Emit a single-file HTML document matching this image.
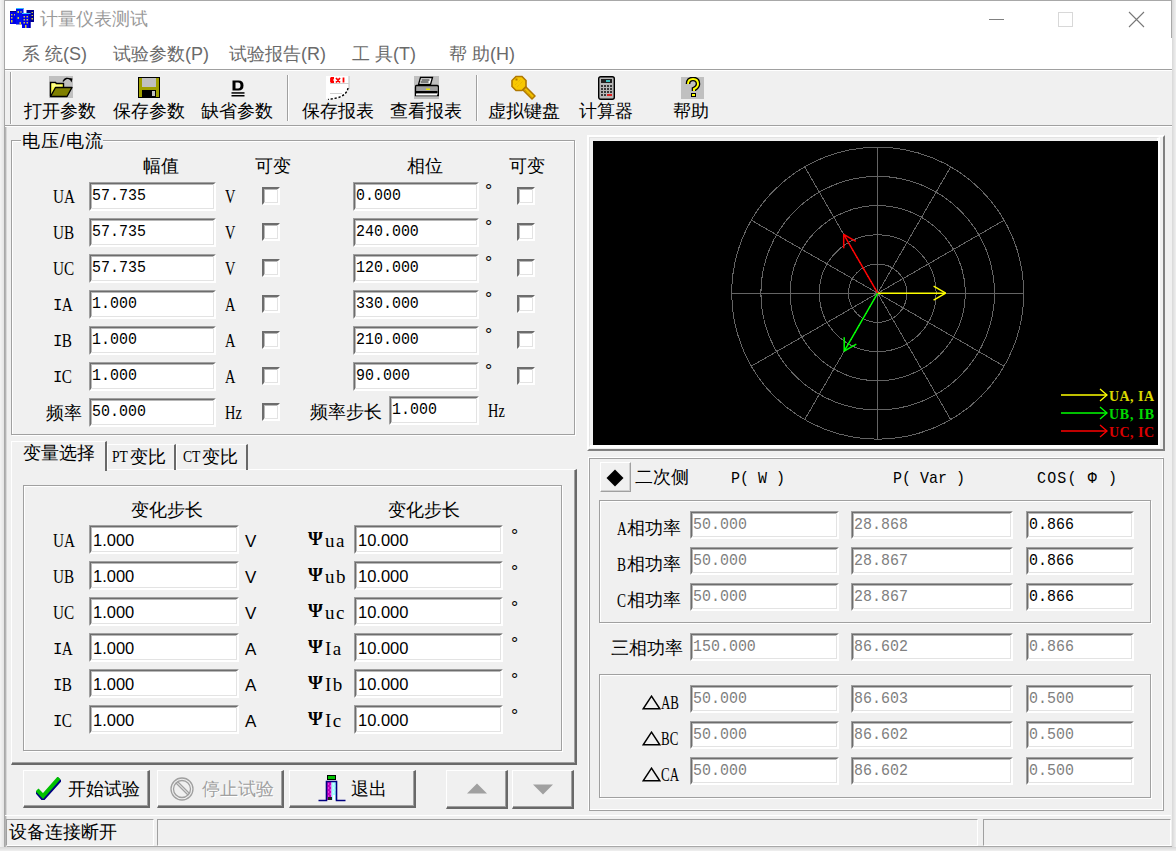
<!DOCTYPE html><html><head><meta charset="utf-8"><style>
*{margin:0;padding:0;box-sizing:content-box}
html,body{width:1176px;height:851px;overflow:hidden;background:#f0f0f0}
body{position:relative;font-family:"Liberation Sans",sans-serif}
div{position:absolute}
.cj{font-size:18px;line-height:18px;white-space:nowrap;color:#000}
.sf{font-family:"Liberation Serif",serif;font-size:19px;line-height:18px;white-space:nowrap;color:#000;transform:scaleX(0.8);transform-origin:0 0}
.ss{font-size:17px;line-height:18px;white-space:nowrap;color:#000}
.mn{font-family:"Liberation Mono",monospace;font-size:17px;line-height:18px;white-space:nowrap}
.edit{background:#fff;border-style:solid;border-width:2px;border-color:#6d6d6d #fff #fff #6d6d6d;box-shadow:inset -1px -1px 0 #e3e3e3, inset 1px 1px 0 #b8b8b8;}
.edit::before{content:"";position:absolute;left:-2px;top:-2px;right:-2px;bottom:-2px;border-style:solid;border-width:1px;border-color:#a0a0a0 #fff #fff #a0a0a0}
.ed{position:absolute;left:1px;top:3px;font-family:"Liberation Mono",monospace;font-size:17px;line-height:18px;white-space:nowrap;display:inline-block;transform:scaleX(0.88);transform-origin:0 0}
.eds{position:absolute;left:2px;top:4px;font-family:"Liberation Sans",sans-serif;font-size:16.5px;line-height:18px;white-space:nowrap}
.grp{border:1px solid #a0a0a0;box-shadow:1px 1px 0 #fff, inset 1px 1px 0 #fff}
.grp2{border:1px solid #a0a0a0;box-shadow:-1px -1px 0 #fff, inset -1px -1px 0 #fff}
.btn{background:#f0f0f0;border-style:solid;border-width:1px 2px 2px 1px;border-color:#fff #696969 #696969 #fff;box-shadow:inset -1px -1px 0 #a0a0a0}
.chk{background:#fff;border-style:solid;border-width:2px;border-color:#6d6d6d #fff #fff #6d6d6d;box-shadow:inset -1px -1px 0 #e3e3e3, inset 1px 1px 0 #b8b8b8}
</style></head><body><div style="left:0;top:0;width:4px;height:851px;background:linear-gradient(90deg,#f4f4f4,#e4e4e4)"></div><div style="left:1172px;top:0;width:4px;height:851px;background:linear-gradient(90deg,#d8d8d8,#f0f0f0)"></div><div style="left:0;top:847px;width:1176px;height:4px;background:linear-gradient(180deg,#d8d8d8,#f0f0f0)"></div><div style="position:absolute;left:4px;top:0px;width:1168px;height:847px;box-sizing:border-box;border:1px solid #a8a8a8;border-right:0;background:#f0f0f0"></div><div style="position:absolute;left:5px;top:1px;width:1167px;height:68px;background:#fff"></div><div style="position:absolute;left:1171px;top:0px;width:1px;height:38px;background:#a8a8a8"></div><div style="position:absolute;left:5px;top:69px;width:1167px;height:1px;background:#a0a0a0"></div><div style="position:absolute;left:5px;top:70px;width:1167px;height:1px;background:#fff"></div><svg style="position:absolute;left:10px;top:8px" width="25" height="21" viewBox="0 0 25 21">
<rect x="0" y="3" width="6" height="13" fill="#0000e8"/><rect x="0" y="3" width="6" height="1" fill="#000080"/>
<rect x="16.5" y="2" width="7.5" height="12" fill="#000090"/>
<rect x="6" y="0" width="7.5" height="16.5" fill="#0010f0"/><rect x="6" y="0" width="7.5" height="1" fill="#30c0ff"/>
<rect x="12" y="5" width="8.5" height="15" fill="#0000f0"/><rect x="12" y="5" width="8.5" height="1" fill="#30c0ff"/><rect x="19" y="6" width="1.5" height="14" fill="#0000a0"/>
<g fill="#d0c840"><rect x="1" y="6" width="1.5" height="1.5"/><rect x="4" y="6" width="1" height="1.5"/><rect x="1" y="9" width="1.5" height="1.5"/><rect x="1" y="12" width="1.5" height="2.5"/>
<rect x="7.5" y="3" width="1.5" height="2"/><rect x="10.5" y="3" width="1" height="2"/><rect x="7.5" y="9" width="1.5" height="2"/><rect x="9.5" y="14" width="1.5" height="3"/>
<rect x="13.5" y="8" width="1.5" height="1.5"/><rect x="16.5" y="8" width="1.5" height="1.5"/><rect x="13.5" y="11" width="1.5" height="1.5"/><rect x="16.5" y="11" width="1.5" height="1.5"/><rect x="13.5" y="14" width="1.5" height="1.5"/><rect x="16.5" y="14" width="1.5" height="1.5"/><rect x="15" y="17" width="1.5" height="3"/>
<rect x="21.5" y="4" width="1.5" height="1"/><rect x="21.5" y="7" width="1.5" height="1"/><rect x="21.5" y="10" width="1.5" height="1.5"/></g></svg><div class="cj" style="left:40px;top:10px;color:#9a9a9a">计量仪表测试</div><div style="position:absolute;left:989px;top:19px;width:15px;height:1px;background:#808080"></div><div style="position:absolute;left:1058px;top:12px;width:15px;height:15px;box-sizing:border-box;border:1px solid #d8d8d8"></div><svg style="position:absolute;left:1128px;top:11px" width="17" height="17"><path d="M1 1L16 16M16 1L1 16" stroke="#777" stroke-width="1.1"/></svg><div class="cj" style="left:22px;top:45px;font-size:18px;color:#6a6a6a">系 统(S)</div><div class="cj" style="left:113px;top:45px;font-size:18px;color:#6a6a6a">试验参数(P)</div><div class="cj" style="left:229px;top:45px;font-size:18px;color:#6a6a6a">试验报告(R)</div><div class="cj" style="left:352px;top:45px;font-size:18px;color:#6a6a6a">工 具(T)</div><div class="cj" style="left:449px;top:45px;font-size:18px;color:#6a6a6a">帮 助(H)</div><div style="position:absolute;left:10px;top:72px;width:1px;height:52px;background:#a0a0a0;box-shadow:1px 0 0 #fff"></div><div style="position:absolute;left:5px;top:125px;width:1167px;height:1px;background:#a0a0a0"></div><div style="position:absolute;left:5px;top:126px;width:1167px;height:1px;background:#fff"></div><div class="cj" style="left:24px;top:102px;">打开参数</div><div class="cj" style="left:113px;top:102px;">保存参数</div><div class="cj" style="left:201px;top:102px;">缺省参数</div><div class="cj" style="left:302px;top:102px;">保存报表</div><div class="cj" style="left:390px;top:102px;">查看报表</div><div class="cj" style="left:488px;top:102px;">虚拟键盘</div><div class="cj" style="left:579px;top:102px;">计算器</div><div class="cj" style="left:673px;top:102px;">帮助</div><div style="position:absolute;left:287px;top:75px;width:1px;height:46px;background:#a0a0a0;box-shadow:1px 0 0 #fff"></div><div style="position:absolute;left:476px;top:75px;width:1px;height:46px;background:#a0a0a0;box-shadow:1px 0 0 #fff"></div><svg style="position:absolute;left:49px;top:76px" width="24" height="22" viewBox="0 0 24 22">
<rect width="24" height="22" fill="#c0c0c0"/>
<path d="M1.5 20V6.5h5l1 1h7v4" fill="#ffff50" stroke="#000" stroke-width="1.4"/>
<path d="M3 8h3M3 10h9" stroke="#ffffc0" stroke-width="1"/>
<path d="M1.5 20.5l5-9h16.5l-5 9z" fill="#808000" stroke="#000" stroke-width="1.4" stroke-linejoin="round"/>
<path d="M14 5.5q3-5 7.5-2" fill="none" stroke="#000" stroke-width="1.4"/><path d="M20 2l3.5 0.5l-1 4z" fill="#000"/></svg><svg style="position:absolute;left:138px;top:77px" width="22" height="21" viewBox="0 0 22 21">
<rect x="0.5" y="0.5" width="21" height="20" fill="#a0a000" stroke="#000"/>
<rect x="4" y="1" width="14" height="9" fill="#c0c0c0"/><rect x="4" y="13" width="14" height="7" fill="#000"/><rect x="14" y="14" width="3" height="5" fill="#c0c0c0"/></svg><svg style="position:absolute;left:230px;top:79px" width="17" height="19" viewBox="0 0 17 19">
<path d="M2.5 1.5h6q5 0 5 5q0 5-5 5h-6z M5.5 3.5v6h2.5q2.5 0 2.5-3q0-3-2.5-3z" fill="#000" fill-rule="evenodd"/><rect x="1.5" y="13.2" width="13" height="1.5" fill="#000"/><rect x="1.5" y="16" width="13" height="1.5" fill="#000"/></svg><svg style="position:absolute;left:326px;top:76px" width="25" height="24" viewBox="0 0 25 24">
<path d="M0 0h23v13q-4 8-13 10H0z" fill="#fff"/>
<path d="M23 0v13" stroke="#c0c0c0" stroke-width="1"/><path d="M4 7.5h19M4 17.5h12" stroke="#d0d0d0" stroke-width="1"/>
<path d="M5 1.5v5M5 2h3M5 4h2.5M5 6h3M10 2l4 4.5M14 2l-4 4.5M17.5 1.5v5" fill="none" stroke="#ff0000" stroke-width="1.8"/>
<path d="M22 12q-1 7-11 10L2 23.5" fill="none" stroke="#000" stroke-width="1.4" stroke-dasharray="2.2 1.8"/></svg><svg style="position:absolute;left:414px;top:76px" width="25" height="23" viewBox="0 0 25 23">
<rect width="25" height="23" fill="#c0c0c0"/>
<path d="M6.5 1.5h12l-2 7h-12z" fill="#fff" stroke="#000" stroke-width="1.3"/><path d="M7.5 4h8M6.5 6h8" stroke="#000"/>
<path d="M2 9.5h21q1.5 0 1.5 2v8h-23v-8q0-2 0.5-2z" fill="#a0a0a0" stroke="#000" stroke-width="1.3"/><rect x="1.5" y="15" width="22" height="2" fill="#000"/><rect x="2" y="18" width="21" height="1.5" fill="#fff"/><rect x="12" y="12.5" width="4" height="1.5" fill="#e8e000"/></svg><svg style="position:absolute;left:511px;top:75px" width="25" height="25" viewBox="0 0 25 25">
<path d="M5 1.5h6l4 4v6l-4 4h-6l-4-4v-6z" fill="#f8c800" stroke="#b07800" stroke-width="1.6"/>
<path d="M4.5 3.5h2v2h-2z" fill="#b07800"/><path d="M4 10l6-6M6 12l6-6" stroke="#e0a800" stroke-width="0.8" stroke-dasharray="1 1"/>
<path d="M12 15l3-3l9 9l-3 3z" fill="#f0c000" stroke="#b07800" stroke-width="1.5" stroke-linejoin="round"/>
<path d="M14 15l7 7" stroke="#c89000" stroke-width="1" stroke-dasharray="1 1"/></svg><svg style="position:absolute;left:598px;top:76px" width="17" height="24" viewBox="0 0 17 24">
<rect x="0.7" y="0.7" width="15.6" height="22.6" rx="2" fill="#b8b8b8" stroke="#000" stroke-width="1.4"/><rect x="3" y="3" width="11" height="4" fill="#202020"/><rect x="8" y="4" width="4" height="2" fill="#40c0c0"/>
<g fill="#383838"><rect x="3" y="9" width="2" height="2"/><rect x="6" y="9" width="2" height="2"/><rect x="9" y="9" width="2" height="2"/><rect x="12" y="9" width="2" height="2"/>
<rect x="3" y="12" width="2" height="2"/><rect x="6" y="12" width="2" height="2"/><rect x="9" y="12" width="2" height="2"/><rect x="12" y="12" width="2" height="2"/>
<rect x="3" y="15" width="2" height="2"/><rect x="6" y="15" width="2" height="2"/><rect x="9" y="15" width="2" height="2"/><rect x="12" y="15" width="2" height="2"/>
<rect x="3" y="18" width="2" height="2"/><rect x="6" y="18" width="2" height="2"/></g><rect x="9" y="18" width="5" height="2" fill="#e02020"/></svg><svg style="position:absolute;left:681px;top:77px" width="23" height="22" viewBox="0 0 23 22">
<rect width="23" height="22" fill="#c0c0c0"/>
<path d="M7 7q0-5 5-5t5 5q0 3-4 5v2" fill="none" stroke="#000" stroke-width="4.6"/><path d="M7 7q0-5 5-5t5 5q0 3-4 5v2" fill="none" stroke="#ffff00" stroke-width="2"/>
<rect x="10" y="16" width="5" height="4" fill="#000"/><rect x="11" y="17" width="3" height="2" fill="#ffff00"/></svg><div style="position:absolute;left:5px;top:127px;width:1px;height:720px;background:#b4b4b4"></div><div style="position:absolute;left:6px;top:127px;width:1px;height:720px;background:#d8d8d8"></div><div class="grp" style="left:11px;top:140px;width:562px;height:293px;"></div><div style="position:absolute;left:21px;top:130px;width:82px;height:20px;background:#f0f0f0"></div><div class="cj" style="left:22px;top:132px;letter-spacing:1px">电压/电流</div><div class="cj" style="left:143px;top:157px;">幅值</div><div class="cj" style="left:255px;top:157px;">可变</div><div class="cj" style="left:407px;top:157px;">相位</div><div class="cj" style="left:509px;top:157px;">可变</div><div class="sf" style="left:53px;top:188px;">UA</div><div class="edit" style="left:89px;top:182px;width:123px;height:25px"><span class="ed" style="color:#000">57.735</span></div><div class="sf" style="left:225px;top:188px;font-size:18px">V</div><div class="chk" style="left:262px;top:187px;width:14px;height:14px"></div><div class="edit" style="left:353px;top:182px;width:122px;height:25px"><span class="ed" style="color:#000">0.000</span></div><div class="cj" style="left:485px;top:182px;">°</div><div class="chk" style="left:517px;top:187px;width:14px;height:14px"></div><div class="sf" style="left:53px;top:224px;">UB</div><div class="edit" style="left:89px;top:218px;width:123px;height:25px"><span class="ed" style="color:#000">57.735</span></div><div class="sf" style="left:225px;top:224px;font-size:18px">V</div><div class="chk" style="left:262px;top:223px;width:14px;height:14px"></div><div class="edit" style="left:353px;top:218px;width:122px;height:25px"><span class="ed" style="color:#000">240.000</span></div><div class="cj" style="left:485px;top:218px;">°</div><div class="chk" style="left:517px;top:223px;width:14px;height:14px"></div><div class="sf" style="left:53px;top:260px;">UC</div><div class="edit" style="left:89px;top:254px;width:123px;height:25px"><span class="ed" style="color:#000">57.735</span></div><div class="sf" style="left:225px;top:260px;font-size:18px">V</div><div class="chk" style="left:262px;top:259px;width:14px;height:14px"></div><div class="edit" style="left:353px;top:254px;width:122px;height:25px"><span class="ed" style="color:#000">120.000</span></div><div class="cj" style="left:485px;top:254px;">°</div><div class="chk" style="left:517px;top:259px;width:14px;height:14px"></div><div class="sf" style="left:53px;top:296px;"><span style="font-family:Liberation Mono;font-size:17px;display:inline-block;transform:scaleX(1.15) translateY(-1px);transform-origin:0 0;width:11px">I</span>A</div><div class="edit" style="left:89px;top:290px;width:123px;height:25px"><span class="ed" style="color:#000">1.000</span></div><div class="sf" style="left:225px;top:296px;font-size:18px">A</div><div class="chk" style="left:262px;top:295px;width:14px;height:14px"></div><div class="edit" style="left:353px;top:290px;width:122px;height:25px"><span class="ed" style="color:#000">330.000</span></div><div class="cj" style="left:485px;top:290px;">°</div><div class="chk" style="left:517px;top:295px;width:14px;height:14px"></div><div class="sf" style="left:53px;top:332px;"><span style="font-family:Liberation Mono;font-size:17px;display:inline-block;transform:scaleX(1.15) translateY(-1px);transform-origin:0 0;width:11px">I</span>B</div><div class="edit" style="left:89px;top:326px;width:123px;height:25px"><span class="ed" style="color:#000">1.000</span></div><div class="sf" style="left:225px;top:332px;font-size:18px">A</div><div class="chk" style="left:262px;top:331px;width:14px;height:14px"></div><div class="edit" style="left:353px;top:326px;width:122px;height:25px"><span class="ed" style="color:#000">210.000</span></div><div class="cj" style="left:485px;top:326px;">°</div><div class="chk" style="left:517px;top:331px;width:14px;height:14px"></div><div class="sf" style="left:53px;top:368px;"><span style="font-family:Liberation Mono;font-size:17px;display:inline-block;transform:scaleX(1.15) translateY(-1px);transform-origin:0 0;width:11px">I</span>C</div><div class="edit" style="left:89px;top:362px;width:123px;height:25px"><span class="ed" style="color:#000">1.000</span></div><div class="sf" style="left:225px;top:368px;font-size:18px">A</div><div class="chk" style="left:262px;top:367px;width:14px;height:14px"></div><div class="edit" style="left:353px;top:362px;width:122px;height:25px"><span class="ed" style="color:#000">90.000</span></div><div class="cj" style="left:485px;top:362px;">°</div><div class="chk" style="left:517px;top:367px;width:14px;height:14px"></div><div class="cj" style="left:46px;top:404px;">频率</div><div class="edit" style="left:89px;top:398px;width:123px;height:25px"><span class="ed" style="color:#000">50.000</span></div><div class="sf" style="left:225px;top:404px;font-size:18px">Hz</div><div class="chk" style="left:262px;top:403px;width:14px;height:14px"></div><div class="cj" style="left:310px;top:403px;">频率步长</div><div class="edit" style="left:389px;top:396px;width:86px;height:25px"><span class="ed" style="color:#000">1.000</span></div><div class="sf" style="left:488px;top:402px;font-size:18px">Hz</div><div style="left:11px;top:469px;width:563px;height:293px;border-style:solid;border-width:1px 2px 2px 1px;border-color:#fff #696969 #696969 #fff;box-shadow:inset -1px -1px 0 #a0a0a0"></div><div style="left:11px;top:441px;width:93px;height:29px;background:#f0f0f0;border-style:solid;border-width:1px 2px 0 1px;border-color:#fff #696969 #fff #fff"></div><div style="left:107px;top:444px;width:66px;height:25px;border-style:solid;border-width:1px 2px 0 1px;border-color:#fff #696969 #fff #fff"></div><div style="left:176px;top:444px;width:69px;height:25px;border-style:solid;border-width:1px 2px 0 1px;border-color:#fff #696969 #fff #fff"></div><div class="cj" style="left:23px;top:444px;">变量选择</div><div class="sf" style="left:112px;top:448px;font-size:17px">PT</div><div class="cj" style="left:130px;top:448px;">变比</div><div class="sf" style="left:183px;top:448px;font-size:17px">CT</div><div class="cj" style="left:202px;top:448px;">变比</div><div class="grp" style="left:23px;top:485px;width:537px;height:264px;"></div><div class="cj" style="left:131px;top:501px;">变化步长</div><div class="cj" style="left:388px;top:501px;">变化步长</div><div class="sf" style="left:53px;top:532px;">UA</div><div class="edit" style="left:89px;top:525px;width:146px;height:25px"><span class="eds">1.000</span></div><div class="ss" style="left:245px;top:533px;">V</div><div class="sf" style="left:308px;top:530px;font-size:19px;font-weight:bold;transform:none">Ψ</div><div class="sf" style="left:325px;top:532px;font-size:19px;letter-spacing:1.5px;transform:none">ua</div><div class="edit" style="left:354px;top:525px;width:145px;height:25px"><span class="eds">10.000</span></div><div class="cj" style="left:511px;top:527px;">°</div><div class="sf" style="left:53px;top:568px;">UB</div><div class="edit" style="left:89px;top:561px;width:146px;height:25px"><span class="eds">1.000</span></div><div class="ss" style="left:245px;top:569px;">V</div><div class="sf" style="left:308px;top:566px;font-size:19px;font-weight:bold;transform:none">Ψ</div><div class="sf" style="left:325px;top:568px;font-size:19px;letter-spacing:1.5px;transform:none">ub</div><div class="edit" style="left:354px;top:561px;width:145px;height:25px"><span class="eds">10.000</span></div><div class="cj" style="left:511px;top:563px;">°</div><div class="sf" style="left:53px;top:604px;">UC</div><div class="edit" style="left:89px;top:597px;width:146px;height:25px"><span class="eds">1.000</span></div><div class="ss" style="left:245px;top:605px;">V</div><div class="sf" style="left:308px;top:602px;font-size:19px;font-weight:bold;transform:none">Ψ</div><div class="sf" style="left:325px;top:604px;font-size:19px;letter-spacing:1.5px;transform:none">uc</div><div class="edit" style="left:354px;top:597px;width:145px;height:25px"><span class="eds">10.000</span></div><div class="cj" style="left:511px;top:599px;">°</div><div class="sf" style="left:53px;top:640px;"><span style="font-family:Liberation Mono;font-size:17px;display:inline-block;transform:scaleX(1.15) translateY(-1px);transform-origin:0 0;width:11px">I</span>A</div><div class="edit" style="left:89px;top:633px;width:146px;height:25px"><span class="eds">1.000</span></div><div class="ss" style="left:245px;top:641px;">A</div><div class="sf" style="left:308px;top:638px;font-size:19px;font-weight:bold;transform:none">Ψ</div><div class="sf" style="left:325px;top:640px;font-size:19px;letter-spacing:1.5px;transform:none">Ia</div><div class="edit" style="left:354px;top:633px;width:145px;height:25px"><span class="eds">10.000</span></div><div class="cj" style="left:511px;top:635px;">°</div><div class="sf" style="left:53px;top:676px;"><span style="font-family:Liberation Mono;font-size:17px;display:inline-block;transform:scaleX(1.15) translateY(-1px);transform-origin:0 0;width:11px">I</span>B</div><div class="edit" style="left:89px;top:669px;width:146px;height:25px"><span class="eds">1.000</span></div><div class="ss" style="left:245px;top:677px;">A</div><div class="sf" style="left:308px;top:674px;font-size:19px;font-weight:bold;transform:none">Ψ</div><div class="sf" style="left:325px;top:676px;font-size:19px;letter-spacing:1.5px;transform:none">Ib</div><div class="edit" style="left:354px;top:669px;width:145px;height:25px"><span class="eds">10.000</span></div><div class="cj" style="left:511px;top:671px;">°</div><div class="sf" style="left:53px;top:712px;"><span style="font-family:Liberation Mono;font-size:17px;display:inline-block;transform:scaleX(1.15) translateY(-1px);transform-origin:0 0;width:11px">I</span>C</div><div class="edit" style="left:89px;top:705px;width:146px;height:25px"><span class="eds">1.000</span></div><div class="ss" style="left:245px;top:713px;">A</div><div class="sf" style="left:308px;top:710px;font-size:19px;font-weight:bold;transform:none">Ψ</div><div class="sf" style="left:325px;top:712px;font-size:19px;letter-spacing:1.5px;transform:none">Ic</div><div class="edit" style="left:354px;top:705px;width:145px;height:25px"><span class="eds">10.000</span></div><div class="cj" style="left:511px;top:707px;">°</div><div class="btn" style="left:23px;top:770px;width:124px;height:35px"></div><svg style="position:absolute;left:36px;top:777px" width="25" height="23" viewBox="0 0 25 23"><path d="M1 14l6 7L24 2" fill="none" stroke="#000080" stroke-width="5"/><path d="M1 13l6 6L23 1" fill="none" stroke="#00c000" stroke-width="4"/></svg><div class="cj" style="left:68px;top:780px;">开始试验</div><div class="btn" style="left:157px;top:770px;width:124px;height:35px"></div><svg style="position:absolute;left:169px;top:776px" width="26" height="26" viewBox="0 0 26 26"><g fill="none" stroke="#a0a0a0" stroke-width="1.3"><circle cx="13" cy="13" r="11"/><circle cx="13" cy="13" r="8.5"/><path d="M7 7l12 12M8.5 5.5l12 12"/></g></svg><div class="cj" style="left:202px;top:780px;color:#a0a0a0;text-shadow:1px 1px 0 #fff">停止试验</div><div class="btn" style="left:289px;top:770px;width:124px;height:35px"></div><svg style="position:absolute;left:318px;top:775px" width="28" height="27" viewBox="0 0 28 27">
<rect x="9.5" y="0.5" width="8" height="4" fill="#00c000" stroke="#000" stroke-width="1"/>
<rect x="8.5" y="7" width="5" height="18" fill="#c000c0"/><rect x="13.5" y="7" width="5" height="18" fill="#a0ffff"/><rect x="15" y="20" width="2" height="5" fill="#fff"/>
<path d="M10 9h1M12 11h1M10 13h1M12 15h1M10 17h1M12 19h1M10 21h1" stroke="#ff80ff"/><path d="M15 9h1M17 11h1M15 13h1M17 15h1M15 17h1" stroke="#fff"/>
<rect x="10" y="22" width="4" height="3" fill="#202020"/>
<path d="M0.5 25.5H8.5V6.5H18.5V25.5H27.5" fill="none" stroke="#000080" stroke-width="1.6"/></svg><div class="cj" style="left:351px;top:780px;">退出</div><div class="btn" style="left:446px;top:770px;width:59px;height:36px"></div><svg style="position:absolute;left:467px;top:783px" width="20" height="11"><path d="M0 10.5L10 0.5L20 10.5z" fill="#a0a0a0"/></svg><div class="btn" style="left:512px;top:770px;width:59px;height:36px"></div><svg style="position:absolute;left:533px;top:784px" width="20" height="11"><path d="M0 0.5L20 0.5L10 10.5z" fill="#a0a0a0"/></svg><div style="left:587px;top:135px;width:574px;height:312px;border-style:solid;border-width:2px 2px 2px 2px;border-color:#fff #808080 #808080 #fff"></div><div style="left:589px;top:137px;width:571px;height:311px;border-style:solid;border-width:1px 3px 3px 1px;border-color:#e3e3e3 #fff #fff #e3e3e3;box-sizing:border-box"></div><div style="position:absolute;left:593px;top:141px;width:565px;height:304px;background:#000"></div><svg style="position:absolute;left:593px;top:141px" width="565" height="304"><circle cx="284.70000000000005" cy="152.2" r="29.2" fill="none" stroke="#646464" stroke-width="1" shape-rendering="crispEdges"/><circle cx="284.70000000000005" cy="152.2" r="58.4" fill="none" stroke="#646464" stroke-width="1" shape-rendering="crispEdges"/><circle cx="284.70000000000005" cy="152.2" r="87.6" fill="none" stroke="#646464" stroke-width="1" shape-rendering="crispEdges"/><circle cx="284.70000000000005" cy="152.2" r="116.8" fill="none" stroke="#646464" stroke-width="1" shape-rendering="crispEdges"/><circle cx="284.70000000000005" cy="152.2" r="146.0" fill="none" stroke="#646464" stroke-width="1" shape-rendering="crispEdges"/><line x1="284.70000000000005" y1="152.2" x2="430.7" y2="152.2" stroke="#646464" stroke-width="1" shape-rendering="crispEdges"/><line x1="284.70000000000005" y1="152.2" x2="411.1" y2="79.2" stroke="#646464" stroke-width="1" shape-rendering="crispEdges"/><line x1="284.70000000000005" y1="152.2" x2="357.7" y2="25.8" stroke="#646464" stroke-width="1" shape-rendering="crispEdges"/><line x1="284.70000000000005" y1="152.2" x2="284.7" y2="6.2" stroke="#646464" stroke-width="1" shape-rendering="crispEdges"/><line x1="284.70000000000005" y1="152.2" x2="211.7" y2="25.8" stroke="#646464" stroke-width="1" shape-rendering="crispEdges"/><line x1="284.70000000000005" y1="152.2" x2="158.3" y2="79.2" stroke="#646464" stroke-width="1" shape-rendering="crispEdges"/><line x1="284.70000000000005" y1="152.2" x2="138.7" y2="152.2" stroke="#646464" stroke-width="1" shape-rendering="crispEdges"/><line x1="284.70000000000005" y1="152.2" x2="158.3" y2="225.2" stroke="#646464" stroke-width="1" shape-rendering="crispEdges"/><line x1="284.70000000000005" y1="152.2" x2="211.7" y2="278.6" stroke="#646464" stroke-width="1" shape-rendering="crispEdges"/><line x1="284.70000000000005" y1="152.2" x2="284.7" y2="298.2" stroke="#646464" stroke-width="1" shape-rendering="crispEdges"/><line x1="284.70000000000005" y1="152.2" x2="357.7" y2="278.6" stroke="#646464" stroke-width="1" shape-rendering="crispEdges"/><line x1="284.70000000000005" y1="152.2" x2="411.1" y2="225.2" stroke="#646464" stroke-width="1" shape-rendering="crispEdges"/><line x1="284.70000000000005" y1="152.2" x2="352.7" y2="152.2" stroke="#ffff00" stroke-width="1.5"/><line x1="352.7" y1="152.2" x2="340.6" y2="159.2" stroke="#ffff00" stroke-width="1.5"/><line x1="352.7" y1="152.2" x2="340.6" y2="145.2" stroke="#ffff00" stroke-width="1.5"/><line x1="284.70000000000005" y1="152.2" x2="250.7" y2="93.3" stroke="#ff0000" stroke-width="1.5"/><line x1="250.7" y1="93.3" x2="262.8" y2="100.3" stroke="#ff0000" stroke-width="1.5"/><line x1="250.7" y1="93.3" x2="250.7" y2="107.3" stroke="#ff0000" stroke-width="1.5"/><line x1="284.70000000000005" y1="152.2" x2="251.2" y2="210.2" stroke="#00ff00" stroke-width="1.5"/><line x1="251.2" y1="210.2" x2="251.2" y2="196.2" stroke="#00ff00" stroke-width="1.5"/><line x1="251.2" y1="210.2" x2="263.3" y2="203.2" stroke="#00ff00" stroke-width="1.5"/><line x1="468" y1="254" x2="514" y2="254" stroke="#ffff00" stroke-width="1.5"/><path d="M507 248L514 254L507 260" fill="none" stroke="#ffff00" stroke-width="1.3"/><text x="516" y="260" fill="#ffff00" font-family="Liberation Serif" font-weight="bold" font-size="14" textLength="45" lengthAdjust="spacing" opacity="0.85">UA, IA</text><line x1="468" y1="272" x2="514" y2="272" stroke="#00ff00" stroke-width="1.5"/><path d="M507 266L514 272L507 278" fill="none" stroke="#00ff00" stroke-width="1.3"/><text x="516" y="278" fill="#00ff00" font-family="Liberation Serif" font-weight="bold" font-size="14" textLength="45" lengthAdjust="spacing" opacity="0.85">UB, IB</text><line x1="468" y1="290" x2="514" y2="290" stroke="#ff0000" stroke-width="1.5"/><path d="M507 284L514 290L507 296" fill="none" stroke="#ff0000" stroke-width="1.3"/><text x="516" y="296" fill="#ff0000" font-family="Liberation Serif" font-weight="bold" font-size="14" textLength="45" lengthAdjust="spacing" opacity="0.85">UC, IC</text></svg><div class="grp2" style="left:589px;top:458px;width:573px;height:351px"></div><div style="left:600px;top:462px;width:29px;height:28px;border-style:solid;border-width:1px;border-color:#fff #a0a0a0 #a0a0a0 #fff;box-shadow:inset -1px -1px 0 #d0d0d0"><svg style="position:absolute;left:5px;top:6px" width="18" height="18"><path d="M9 0.5L17.5 9L9 17.5L0.5 9z" fill="#000"/></svg></div><div class="cj" style="left:635px;top:468px;">二次侧</div><div class="mn" style="left:731px;top:470px;color:#000;transform:scaleX(0.882);transform-origin:0 0">P(&nbsp;W&nbsp;)</div><div class="mn" style="left:893px;top:470px;color:#000;transform:scaleX(0.882);transform-origin:0 0">P(&nbsp;Var&nbsp;)</div><div class="mn" style="left:1037px;top:470px;color:#000;transform:scaleX(0.882);transform-origin:0 0;letter-spacing:1.3px">COS(&nbsp;Φ&nbsp;)</div><div class="grp" style="left:599px;top:500px;width:550px;height:121px;"></div><div class="sf" style="left:617px;top:520px;font-size:18px;transform:scaleX(0.75)">A</div><div class="cj" style="left:627px;top:519px;">相功率</div><div class="edit" style="left:690px;top:511px;width:145px;height:24px"><span class="ed" style="color:#808080">50.000</span></div><div class="edit" style="left:851px;top:511px;width:158px;height:24px"><span class="ed" style="color:#808080">28.868</span></div><div class="edit" style="left:1026px;top:511px;width:104px;height:24px"><span class="ed" style="color:#000">0.866</span></div><div class="sf" style="left:617px;top:556px;font-size:18px;transform:scaleX(0.75)">B</div><div class="cj" style="left:627px;top:555px;">相功率</div><div class="edit" style="left:690px;top:547px;width:145px;height:24px"><span class="ed" style="color:#808080">50.000</span></div><div class="edit" style="left:851px;top:547px;width:158px;height:24px"><span class="ed" style="color:#808080">28.867</span></div><div class="edit" style="left:1026px;top:547px;width:104px;height:24px"><span class="ed" style="color:#000">0.866</span></div><div class="sf" style="left:617px;top:592px;font-size:18px;transform:scaleX(0.75)">C</div><div class="cj" style="left:627px;top:591px;">相功率</div><div class="edit" style="left:690px;top:583px;width:145px;height:24px"><span class="ed" style="color:#808080">50.000</span></div><div class="edit" style="left:851px;top:583px;width:158px;height:24px"><span class="ed" style="color:#808080">28.867</span></div><div class="edit" style="left:1026px;top:583px;width:104px;height:24px"><span class="ed" style="color:#000">0.866</span></div><div class="cj" style="left:611px;top:639px;">三相功率</div><div class="edit" style="left:690px;top:633px;width:145px;height:24px"><span class="ed" style="color:#808080">150.000</span></div><div class="edit" style="left:851px;top:633px;width:158px;height:24px"><span class="ed" style="color:#808080">86.602</span></div><div class="edit" style="left:1026px;top:633px;width:104px;height:24px"><span class="ed" style="color:#808080">0.866</span></div><div class="grp" style="left:599px;top:674px;width:550px;height:122px;"></div><svg style="position:absolute;left:642px;top:695px" width="19" height="15"><path d="M9.5 1.2L17.8 13.8H1.2z" fill="none" stroke="#000" stroke-width="1.5" stroke-linejoin="miter"/></svg><div class="sf" style="left:661px;top:694px;font-size:18px;transform:scaleX(0.72)">AB</div><div class="edit" style="left:690px;top:685px;width:145px;height:24px"><span class="ed" style="color:#808080">50.000</span></div><div class="edit" style="left:851px;top:685px;width:158px;height:24px"><span class="ed" style="color:#808080">86.603</span></div><div class="edit" style="left:1026px;top:685px;width:104px;height:24px"><span class="ed" style="color:#808080">0.500</span></div><svg style="position:absolute;left:642px;top:731px" width="19" height="15"><path d="M9.5 1.2L17.8 13.8H1.2z" fill="none" stroke="#000" stroke-width="1.5" stroke-linejoin="miter"/></svg><div class="sf" style="left:661px;top:730px;font-size:18px;transform:scaleX(0.72)">BC</div><div class="edit" style="left:690px;top:721px;width:145px;height:24px"><span class="ed" style="color:#808080">50.000</span></div><div class="edit" style="left:851px;top:721px;width:158px;height:24px"><span class="ed" style="color:#808080">86.602</span></div><div class="edit" style="left:1026px;top:721px;width:104px;height:24px"><span class="ed" style="color:#808080">0.500</span></div><svg style="position:absolute;left:642px;top:767px" width="19" height="15"><path d="M9.5 1.2L17.8 13.8H1.2z" fill="none" stroke="#000" stroke-width="1.5" stroke-linejoin="miter"/></svg><div class="sf" style="left:661px;top:766px;font-size:18px;transform:scaleX(0.72)">CA</div><div class="edit" style="left:690px;top:757px;width:145px;height:24px"><span class="ed" style="color:#808080">50.000</span></div><div class="edit" style="left:851px;top:757px;width:158px;height:24px"><span class="ed" style="color:#808080">86.602</span></div><div class="edit" style="left:1026px;top:757px;width:104px;height:24px"><span class="ed" style="color:#808080">0.500</span></div><div style="position:absolute;left:5px;top:815px;width:1166px;height:1px;background:#fff"></div><div style="left:6px;top:819px;width:146px;height:25px;border-style:solid;border-width:1px;border-color:#a0a0a0 #fff #fff #a0a0a0"></div><div style="left:157px;top:819px;width:819px;height:25px;border-style:solid;border-width:1px;border-color:#a0a0a0 #fff #fff #a0a0a0"></div><div style="left:983px;top:819px;width:186px;height:25px;border-style:solid;border-width:1px;border-color:#a0a0a0 #fff #fff #a0a0a0"></div><div class="cj" style="left:9px;top:823px;">设备连接断开</div></body></html>
